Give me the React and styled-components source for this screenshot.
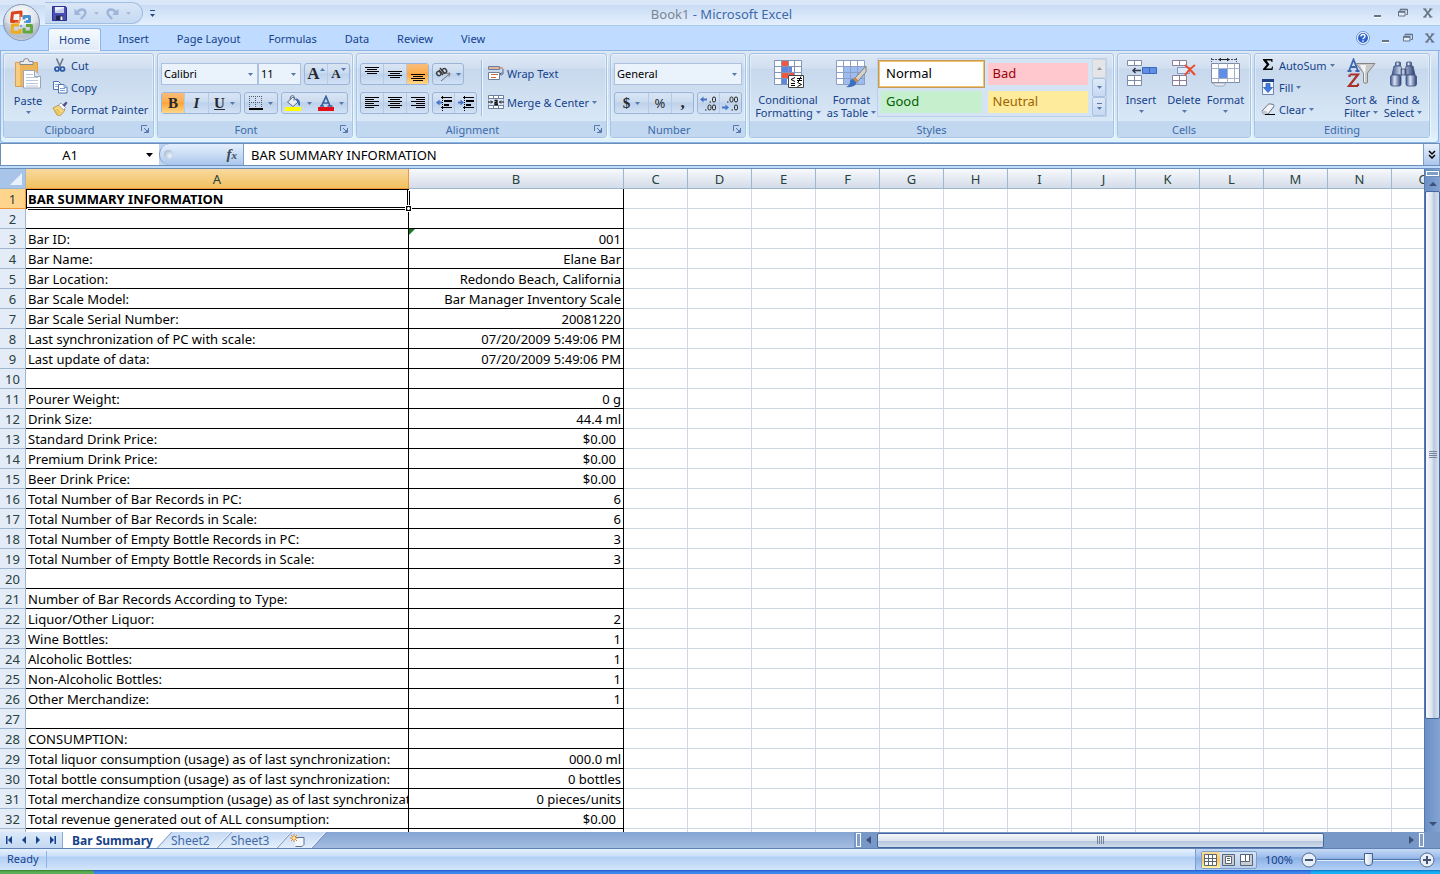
import React from "react";
import styled, { createGlobalStyle } from "styled-components";

const UI = '"Noto Sans", "Open Sans", sans-serif';
const SERIF = '"Liberation Serif", serif';

const GlobalStyle = createGlobalStyle`
  *, *::before, *::after { box-sizing: border-box; }
  body { margin: 0; overflow: hidden; }
  button, input, select { font: inherit; color: inherit; margin: 0; padding: 0; border: 0; background: none; outline: 0; }
  svg { display: block; flex: none; }
`;

const Window = styled.div`
  display: flex;
  flex-direction: column;
  height: 100vh;
  font: 11px/13px ${UI};
  color: #15428b;
  background: #bfdbff;
`;

/* title bar */

const TitleBar = styled.header`
  position: relative;
  display: flex;
  align-items: center;
  height: 26px;
  padding: 0 6px 0 45px;
  background: linear-gradient(#d9e7f9 0 5px, #c9dcf4 5px, #e4effd 25px, #a9cbec 25px);
`;

const OfficeButton = styled.button`
  position: absolute;
  left: 2px;
  top: 3px;
  z-index: 2;
`;

const QuickAccess = styled.div`
  display: flex;
  align-items: center;
  gap: 7px;
  width: 98px;
  height: 22px;
  padding-left: 7px;
  border: 1px solid #a3bfe3;
  border-left: 0;
  border-radius: 0 11px 11px 0;
  background: linear-gradient(#d9e6f7, #c5d9f1);
`;

const PlainButton = styled.button`
  display: flex;
  align-items: center;
  justify-content: center;
`;

const Customize = styled(PlainButton)`
  margin-left: 7px;
`;

const Title = styled.h1`
  flex: 1;
  margin: 0;
  padding: 1px 84px 0 0;
  text-align: center;
  font: 13px/18px ${UI};
  color: #3e6aaa;

  span { color: #7b8591; }
`;

const WindowButtons = styled.div`
  display: flex;
  align-items: center;
  gap: ${(p) => p.$gap}px;
`;

/* ribbon tabs */

const TabRow = styled.nav`
  display: flex;
  align-items: flex-end;
  gap: 6px;
  height: 25px;
  padding: 0 4px 0 48px;
  border-bottom: 1px solid #8db2e3;
`;

const Tab = styled.button`
  height: ${(p) => (p.$active ? 23 : 22)}px;
  padding: 0 11px;
  line-height: 22px;
  color: #15428b;
  ${(p) =>
    p.$active &&
    `
    margin-bottom: -1px;
    border: 1px solid #8db2e3;
    border-bottom: 0;
    border-radius: 3px 3px 0 0;
    padding: 0 10px 1px;
    line-height: 20px;
    background: linear-gradient(#f7fbff, #dfeaf8);
    box-shadow: inset 0 0 0 1px #f4f9ff;
  `}
`;

const TabTools = styled(WindowButtons)`
  margin-left: auto;
  height: 24px;
`;

/* ribbon */

const Ribbon = styled.section`
  display: flex;
  gap: 3px;
  height: 92px;
  margin: 0 1px 0 0;
  padding: 2px 8px 4px 2px;
  border: solid #8db2e3;
  border-width: 0 1px 1px;
  border-radius: 0 0 4px 4px;
  background: linear-gradient(#dde8f5, #cddff2 16px, #c9dcf0 18px, #d8ebf9 80px, #e3f5fd);
`;

const GroupBox = styled.div`
  display: flex;
  flex-direction: column;
  flex: ${(p) => (p.$grow ? "1 1" : "0 0")} ${(p) => p.$w}px;
  height: 85px;
  border: 1px solid #a8c4e4;
  border-radius: 3px;
  background: linear-gradient(#dee8f5, #d1dff0 14px, #c7d8ed 15px, #d9e8f6 68px);
  box-shadow: inset 0 0 0 1px rgba(255, 255, 255, 0.35), 1px 1px 0 #eef6fd;
  overflow: hidden;
`;

const GroupBody = styled.div`
  display: flex;
  flex: 1;
  min-height: 0;
`;

const GroupLabel = styled.div`
  display: flex;
  align-items: center;
  gap: 6px;
  height: 16px;
  padding-right: ${(p) => (p.$launcher ? 4 : 0)}px;
  background: #c1d8f0;
  color: #3e6aaa;

  span { flex: 1; text-align: center; }
`;

const BigButton = styled.button`
  display: flex;
  flex-direction: column;
  align-items: center;
  width: ${(p) => p.$w}px;
  padding-top: ${(p) => p.$top || 4}px;
  white-space: nowrap;

  > svg:first-child { margin-bottom: 5px; }
  > svg:last-child { margin-top: 4px; }
`;

const Line = styled.span`
  display: flex;
  align-items: center;
  gap: 3px;
`;

const Stack = styled.div`
  display: flex;
  flex-direction: column;
`;

const TextButton = styled.button`
  display: flex;
  align-items: center;
  gap: ${(p) => p.$gap || 4}px;
  height: 22px;
  white-space: nowrap;
`;

const Rows = styled.div`
  display: flex;
  flex-direction: column;
  gap: 7px;
  padding: ${(p) => p.$top || 9}px 3px 0;
`;

const Row = styled.div`
  display: flex;
  gap: 3px;
  height: 22px;
`;

const Strip = styled.div`
  display: flex;
  border: 1px solid #9ab5d9;
  border-radius: 3px;
  background: linear-gradient(#d9e5f4, #cbdbef 9px, #bdd1ea 10px, #d2e2f5);
`;

const StripButton = styled.button`
  display: flex;
  align-items: center;
  justify-content: center;
  gap: ${(p) => (p.$tight ? 0 : 5)}px;
  width: ${(p) => p.$w || 22}px;
  color: #26292e;
  ${(p) => p.$divide && "border-left: 1px solid #b4cae6;"}
  ${(p) => p.$on && "background: linear-gradient(#f8bd7a, #fcae4c 9px, #fda43a 10px, #fdd888);"}
  ${(p) => p.$tight && "svg { align-self: flex-start; margin-top: 4px; }"}
`;

const Glyph = styled.span`
  font: ${(p) => (p.$italic ? "italic " : "")}bold ${(p) => p.$size || 15}px/18px ${SERIF};
  ${(p) => p.$under && "text-decoration: underline;"}
`;

const Percent = styled.span`
  font-size: 13px;
`;

const ComboBox = styled.label`
  display: flex;
  align-items: center;
  width: ${(p) => p.$w}px;
  height: 22px;
  margin-right: ${(p) => (p.$join ? -3 : 0)}px;
  padding-right: 4px;
  border: 1px solid #abc1de;
  background: #eaf2fb;

  select {
    appearance: none;
    flex: 1;
    min-width: 0;
    padding: 0 0 2px 2px;
    color: #000;
  }
`;

const Separator = styled.div`
  width: 2px;
  height: 56px;
  margin: 6px 2px 0 1px;
  background: linear-gradient(90deg, #9dbbdf 1px, #eef5fc 1px);
`;

const Gallery = styled.div`
  display: flex;
  flex: 1;
  margin: 4px 6px 4px 0;
  border: 1px solid #b9cfea;
  background: #d5e4f5;
`;

const Swatches = styled.div`
  flex: 1;
  display: grid;
  grid-template-columns: 1fr 1fr;
  grid-template-rows: 22px 22px;
  gap: 6px;
  padding: 4px 4px 3px 3px;
`;

const Swatch = styled.button`
  padding: 0 0 2px 5px;
  text-align: left;
  font: 13px/20px ${UI};
  color: ${(p) => p.$color};
  background: ${(p) => p.$bg};
  ${(p) => p.$on && "box-shadow: 0 0 0 1px #fff, 0 0 0 2px #f2c668, 0 0 0 3px #c09a60;"}
`;

const GalleryScroll = styled.div`
  display: flex;
  flex-direction: column;
  width: 14px;

  button {
    flex: 1;
    border: 1px solid #a9c2e2;
    border-radius: 2px;
    background: linear-gradient(#dfeaf8, #c6d9f1);
  }
  button:first-child { background: #e3e5e9; border-color: #d0d5dd; }
`;

/* formula bar */

const FormulaBar = styled.div`
  display: flex;
  height: 23px;
  border: 1px solid #6b8fb8;
  border-width: 1px 0;
  background: #bfd5f0;
  font: 13px/20px ${UI};
  color: #000;
`;

const NameBox = styled.label`
  display: flex;
  align-items: center;
  width: 159px;
  padding-right: 6px;
  background: #fff;
  border-left: 1px solid #6b8fb8;

  input { flex: 1; min-width: 0; text-align: center; padding-right: 7px; }
`;

const FxArea = styled.div`
  display: flex;
  align-items: center;
  justify-content: space-between;
  width: 85px;
  padding: 0 6px 0 4px;
  border: 1px solid #7f9fc8;
  border-width: 0 1px 0 1px;
  border-radius: 10px 0 0 10px;
  background: linear-gradient(#e4effc, #c9dcf4 50%, #a9c6ec);
`;

const Knob = styled.span`
  width: 9px;
  height: 9px;
  border-radius: 50%;
  background: radial-gradient(circle at 65% 65%, #eef4fb, #93aacb);
`;

const Fx = styled.button`
  font: italic bold 15px/18px ${SERIF};
  color: #3d4a5c;

  small { font-size: 11px; }
`;

const FormulaInput = styled.input`
  flex: 1;
  min-width: 0;
  padding-left: 7px;
  background: #fff;
`;

const ExpandButton = styled(PlainButton)`
  width: 17px;
  border: 1px solid #7f9fc8;
  border-width: 0 1px;
  background: linear-gradient(#e8f1fc, #a9c6ec);
`;

/* worksheet */

const Workspace = styled.main`
  display: flex;
  flex: 1;
  min-height: 0;
  margin-top: 2px;
  border-top: 1px solid #6b8fb8;
`;

const SheetArea = styled.div`
  flex: 1;
  min-width: 0;
  overflow: hidden;
  background: #fff;
`;

const Table = styled.table`
  width: 1456px;
  table-layout: fixed;
  border-collapse: separate;
  border-spacing: 0;
  font: 13px/18px ${UI};
  color: #000;
`;

const Corner = styled.td`
  padding: 3px;
  border: solid #9eb6ce;
  border-width: 0 1px 1px 0;
  background: #a9c4e9;

  svg { margin: 0 0 0 auto; }
`;

const ColHead = styled.th`
  height: 20px;
  padding: 1px 0 0;
  font-weight: 400;
  color: #27413e;
  border: solid ${(p) => (p.$on ? "#f29536" : "#9eb6ce")};
  border-width: 0 1px 1px 0;
  background: ${(p) => (p.$on ? "linear-gradient(#f9d99f, #f1c15f)" : "linear-gradient(#f7f9fc, #d4dce9)")};
`;

const RowHead = styled.th`
  height: 20px;
  padding: 1px 0 0;
  font-weight: 400;
  color: #27413e;
  border: solid ${(p) => (p.$on ? "#f29536" : "#9eb6ce")};
  border-width: 0 1px 1px 0;
  background: ${(p) => (p.$on ? "#ffd58d" : "#e4ecf7")};
`;

const Cell = styled.td`
  position: relative;
  height: 20px;
  padding: 1px ${(p) => (p.$inset ? 7 : 2)}px 0 2px;
  text-align: ${(p) => (p.$right ? "right" : "left")};
  font-weight: ${(p) => (p.$bold ? 700 : 400)};
  white-space: nowrap;
  border: solid ${(p) => (p.$data ? "#000" : "#d0d7e5")};
  border-width: 0 1px 1px 0;

  div { height: 18px; overflow: hidden; margin-right: ${(p) => (p.$right ? 0 : -2)}px; }
`;

const Selection = styled.i`
  position: absolute;
  inset: 0;
  border: 1px solid #000;
  box-shadow: 1px 1px 0 #fff, 2px 2px 0 #000;
  z-index: 1;

  &::after {
    content: "";
    position: absolute;
    right: -5px;
    bottom: -5px;
    width: 7px;
    height: 7px;
    border: 1px solid #fff;
    background: radial-gradient(#fff 1px, #000 2px);
  }
`;

const ErrorMark = styled.i`
  position: absolute;
  left: 0;
  top: 0;
  border: 3px solid;
  border-color: #1a7a22 transparent transparent #1a7a22;
`;

/* scroll bars */

const VScroll = styled.div`
  display: flex;
  flex-direction: column;
  align-items: center;
  width: 16px;
  padding: 2px 0 4px;
  border-left: 1px solid #5578ae;
  background: linear-gradient(90deg, #6c90c4, #82a3d4);
`;

const Splitter = styled.i`
  width: 13px;
  height: 5px;
  border: 1px solid #fff;
  background: #7f9fc8;
  outline: 1px solid #6b8fb8;
`;

const VTrack = styled.div`
  flex: 1;
  align-self: stretch;
  display: flex;
  flex-direction: column;
  align-items: center;
  gap: 3px;
  margin: 4px 0;
`;

const VThumb = styled.div`
  flex: 0 0 83%;
  display: flex;
  align-items: center;
  justify-content: center;
  width: 15px;
  border: 1px solid #45659c;
  border-radius: 2px;
  background: linear-gradient(90deg, #f6f9fd, #dfe5ee 45%, #b9c9df 60%, #d5e3f4);
`;

const SheetBar = styled.div`
  display: flex;
  height: 17px;
  border-bottom: 1px solid #5f81b5;
  background: linear-gradient(#86a5d3, #a3bce0);
`;

const SheetNav = styled.div`
  display: flex;
  align-items: center;
  justify-content: space-around;
  width: 63px;
  padding: 0 2px;
  border-right: 1px solid #8ba8d0;
  background: linear-gradient(#dbe8f9, #c4d8f2);
`;

const SheetTab = styled.button`
  position: relative;
  z-index: ${(p) => p.$z};
  display: flex;
  align-items: center;
  padding: 1px ${(p) => (p.$on ? 11 : 14)}px 0 ${(p) => (p.$on ? 9 : 7)}px;
  font: ${(p) => (p.$on ? 700 : 400)} 12px/16px ${UI};
  color: ${(p) => (p.$on ? "#15428b" : "#3e6aaa")};
  white-space: nowrap;

  &::before {
    content: "";
    position: absolute;
    z-index: -1;
    inset: 0 -1px 0 -14px;
    transform: skewX(-42deg);
    border-right: 1px solid #6f8fc0;
    box-shadow: inset -1px 0 0 #fff;
    background: ${(p) => (p.$on ? "#fff" : "linear-gradient(#c5d9f3, #e3eefb)")};
  }
`;

const SheetTabs = styled.div`
  display: flex;
  flex: 1;
  overflow: hidden;
`;

const HScroll = styled.div`
  display: flex;
  align-items: center;
  flex: 0 0 586px;
  gap: 4px;
  padding: 0 16px 0 2px;
  background: #7898c8;
`;

const Handle = styled.i`
  width: 5px;
  height: 14px;
  border: 1px solid #fff;
  background: #7f9fc8;
`;

const HTrack = styled.div`
  flex: 1;
  height: 15px;
`;

const HThumb = styled.div`
  display: flex;
  align-items: center;
  justify-content: center;
  width: 85%;
  height: 15px;
  border: 1px solid #45659c;
  border-radius: 2px;
  background: linear-gradient(#f3f6fa, #dde4ee 50%, #b7c6db 55%, #cfdcec);
`;

/* status bar */

const StatusBar = styled.footer`
  display: flex;
  align-items: center;
  height: 21px;
  padding-left: 7px;
  background: linear-gradient(#e6f1fe, #cbe0fb 7px, #b1cff5 8px, #d3e5fb);
`;

const Ready = styled.span`
  width: 40px;
  height: 17px;
  line-height: 16px;
  border-right: 1px solid #8db2e3;
`;

const ViewTools = styled.div`
  display: flex;
  align-items: center;
  gap: 8px;
  height: 21px;
  margin-left: auto;
  padding: 0 5px;
  border-left: 1px solid #7f9fc8;
  background: linear-gradient(#c5daf6, #9dbdeb 8px, #8cb1e6 9px, #b3d0f5);
`;

const ViewSwitch = styled.div`
  display: flex;
  height: 18px;
  border: 1px solid #7f9fc8;
  border-radius: 2px;
  background: linear-gradient(#d5e4f8, #b8d0f1);
`;

const ViewButton = styled.button`
  display: flex;
  align-items: center;
  justify-content: center;
  width: 18px;
  ${(p) => p.$on && "background: linear-gradient(#fbd9a0, #fbc762 8px, #fff3a6);"}
`;

const ZoomBox = styled.div`
  display: flex;
  align-items: center;
  width: 134px;
`;

const ZoomRange = styled.input`
  appearance: none;
  flex: 1;
  min-width: 0;
  height: 16px;
  background: linear-gradient(transparent 7px, #4e73a8 7px 8px, #e8f1fc 8px 9px, transparent 9px);

  &::-webkit-slider-thumb {
    appearance: none;
    width: 9px;
    height: 13px;
    border: 1px solid #44608c;
    border-radius: 1px 1px 5px 5px;
    background: linear-gradient(90deg, #fff, #c7d6ea);
  }
`;

const TaskBar = styled.div`
  display: flex;
  height: 4px;
  background: linear-gradient(#2457c5, #3a86ec 2px);

  &::before {
    content: "";
    width: 94px;
    border-radius: 0 3px 0 0;
    background: linear-gradient(#2f7d2f, #5dac57 2px);
  }
  &::after {
    content: "";
    width: 129px;
    margin-left: auto;
    background: linear-gradient(#0c6fc0, #18b0f2 2px);
  }
`;

/* icons */

const Caret = ({ color = "#5678ac", up, bar }) => (
  <svg width="5" height={bar ? 7 : 3} viewBox={bar ? "0 -4 5 7" : "0 0 5 3"}>
    {bar && <path d="M0-4h5v1H0z" fill={color} />}
    <path d={up ? "M0 3h5L2.500 0z" : "M0 0h5L2.500 3z"} fill={color} />
  </svg>
);

const Launcher = () => (
  <svg width="8" height="8" viewBox="0 0 8 8" fill="none" stroke="#5678ac">
    <path d="M.5 6V.5H6" />
    <path d="M3 3l3 3M7.500 3v4.500H3" />
    <path d="M7 4.500V7H4.500z" fill="#5678ac" stroke="none" />
  </svg>
);

const OfficeLogo = () => (
  <svg width="40" height="40" viewBox="0 0 40 40">
    <defs>
      <radialGradient id="orb" cx=".5" cy=".3" r=".75">
        <stop offset="0" stopColor="#fff" />
        <stop offset=".55" stopColor="#dfe4ea" />
        <stop offset=".8" stopColor="#aeb9c8" />
        <stop offset="1" stopColor="#e9eef5" />
      </radialGradient>
    </defs>
    <circle cx="19.500" cy="19.500" r="18" fill="url(#orb)" stroke="#8195b4" />
    <path d="M2.500 19.500a17 17 0 0034 0q-17 5-34 0z" fill="#b6c1d0" opacity=".5" />
    <g fill="none" strokeWidth="3" strokeLinejoin="round">
      <path d="M16.500 18.500H9.500l1-8.500 8.500-1v5" stroke="#d8451a" />
      <path d="M22 16.500v-3h5.500V18.500H24" stroke="#4a8fd0" />
      <path d="M17 22H10.500l-.5 7 8 .5V26" stroke="#efac1f" />
      <path d="M24 22.500h5.500V29H22v-4" stroke="#62a83c" />
    </g>
    <path d="M18 12.500v7h-5" fill="none" stroke="#f08b45" strokeWidth="1.500" />
    <path d="M18 18h3v3h-3z" fill="#fff" />
    <path d="M18 22h2v2h-2zM22 18h2v2h-2z" fill="#7ba6cf" />
  </svg>
);

const SaveIcon = () => (
  <svg width="15" height="15" viewBox="0 0 15 15">
    <path d="M.5.500h13l1 1v13H.5z" fill="#4a4fb4" stroke="#2d3190" />
    <path d="M3 1h9v6H3z" fill="#eef1fa" />
    <path d="M3 5l9-3v5H3z" fill="#c4cdec" />
    <path d="M4 9.500h7V14H4z" fill="#23264f" />
    <path d="M8.500 10.500h2V14h-2z" fill="#fff" />
  </svg>
);

const UndoIcon = ({ flip }) => (
  <svg width="13" height="13" viewBox="0 0 13 13" fill="none" stroke="#9fb4d8">
    <g transform={flip ? "matrix(-1 0 0 1 13 0)" : undefined}>
      <path d="M3 6C5.500 1.500 11 1.500 11.500 5.500c0 3-2.500 4-4.500 6.500" strokeWidth="2.400" />
      <path d="M.5 1.500V8H7z" fill="#9fb4d8" stroke="none" />
    </g>
  </svg>
);

const MinIcon = () => (
  <svg width="12" height="12" viewBox="0 0 12 12">
    <path d="M2 8h7v2H2z" fill="#667384" />
    <path d="M2 10h7v1H2z" fill="#fff" />
  </svg>
);
const RestoreIcon = () => (
  <svg width="12" height="12" viewBox="0 0 12 12" fill="none" stroke="#667384">
    <path d="M3 4V2.500h7.500v5H9" />
    <path d="M3 2.500h7.500" strokeWidth="1.600" />
    <path d="M1.500 4.500H8v4.500H1.500z" fill="#e4effc" />
    <path d="M1.500 5H8" strokeWidth="1.600" />
  </svg>
);
const CloseIcon = () => (
  <svg width="12" height="12" viewBox="0 0 12 12" fill="none" stroke="#667384">
    <path d="M2.500 2l6.500 8M9 2l-6.500 8" strokeWidth="1.800" />
    <path d="M1 2h3.500M7 2h3.500M1 10h3.500M7 10h3.500" />
  </svg>
);
const HelpIcon = () => (
  <svg width="14" height="14" viewBox="0 0 14 14">
    <circle cx="7" cy="7" r="6.500" fill="#f4f9ff" stroke="#6f94cf" />
    <circle cx="7" cy="7" r="5" fill="#2b62cc" />
    <path d="M5 5.500q0-2 2-2t2 1.800q0 1-1 1.500T7 8.300" fill="none" stroke="#fff" strokeWidth="1.400" />
    <path d="M6.300 9.300h1.400v1.400H6.300z" fill="#fff" />
  </svg>
);

const PasteIcon = () => (
  <svg width="28" height="31" viewBox="0 0 28 31">
    <path d="M1.500 4.500h22v24h-22z" fill="#eeb458" stroke="#dda04a" />
    <path d="M2 5h4v23H2z" fill="#f6cd82" />
    <path d="M6 3.500h3.500q0-3 2.800-3t2.800 3H19v3H6z" fill="#e9eaec" stroke="#84888f" />
    <path d="M9.500 12.500h11l6 6v11.500h-17z" fill="#fff" stroke="#97a5bd" />
    <path d="M20.500 12.500v6h6" fill="#dde6f3" stroke="#97a5bd" />
    <path d="M12 16.500h7M12 19.500h12M12 22.500h12M12 25.500h12M12 28h12" stroke="#b9c6dc" />
  </svg>
);
const CutIcon = () => (
  <svg width="16" height="16" viewBox="0 0 16 16" fill="none">
    <path d="M4.500 1.500l4 9M11 1.500l-4 9" stroke="#6c7787" strokeWidth="1.600" />
    <circle cx="5" cy="12" r="2" stroke="#2c57a8" strokeWidth="1.700" />
    <circle cx="10.500" cy="12" r="2" stroke="#2c57a8" strokeWidth="1.700" />
  </svg>
);
const CopyIcon = () => (
  <svg width="16" height="16" viewBox="0 0 16 16" stroke="#4a72b0" fill="#fff">
    <path d="M1.500 2.500h5l2 2v6h-7z" />
    <path d="M3 5.500h4M3 7.500h4" stroke="#89a9d8" />
    <path d="M6.500 5.500h5.500l3 3v5.500H6.500z" />
    <path d="M12 5.500v3h3M8 9.500h5M8 11.500h5" stroke="#7a9cd0" fill="none" />
  </svg>
);
const PainterIcon = () => (
  <svg width="16" height="16" viewBox="0 0 16 16">
    <path d="M1 7l6-3 6 5-4 5q-2 1-4 0z" fill="#f5d77c" stroke="#b48a35" strokeWidth=".8" />
    <path d="M6.500 4l2.500-2 4.500 4.500-2 2.500z" fill="#fff" stroke="#8c8c9b" strokeWidth=".8" />
    <path d="M10.500 4L14 .5 15.500 2 12.500 6z" fill="#574f86" />
    <path d="M2.500 9l4 4M4.500 8l4 4" stroke="#d5a846" />
  </svg>
);

const BorderIcon = () => (
  <svg width="14" height="14" viewBox="0 0 14 14" fill="none">
    <path
      d="M0 .5h14M0 6.500h14M.5 0v12M6.500 0v12M12.500 0v12"
      stroke="#4a5a76"
      strokeDasharray="1 1"
      shapeRendering="crispEdges"
    />
    <path d="M0 13h14" stroke="#000" strokeWidth="2" />
  </svg>
);
const FillColorIcon = () => (
  <svg width="17" height="17" viewBox="0 0 17 17">
    <path d="M2.500 7l5.500-5 5 5-5 4.500z" fill="#e8eef6" stroke="#5b6a82" />
    <path d="M5 4.500q0-4 2.500-4T9 5.500" fill="none" stroke="#5b6a82" />
    <path d="M10.500 3q5.500 1 4.500 8-2.500-1-2.500-4z" fill="#3b6ab8" />
    <path d="M0 12h16v4H0z" fill="#ff0" />
  </svg>
);
const FontColorIcon = () => (
  <svg width="16" height="17" viewBox="0 0 16 17">
    <path d="M3.500 11L8 1.500l4 9.500M5 8h6M2 11h4M9.500 11h5" fill="none" stroke="#3a5f9e" strokeWidth="1.700" />
    <path d="M0 12h16v4H0z" fill="#e3101c" />
  </svg>
);

const AlignIcon = ({ kind }) => {
  const rows = {
    top: [[0, 14], [2, 10], [0, 14], [2, 10]],
    left: [[0, 14], [0, 9], [0, 14], [0, 9], [0, 14], [0, 9]],
    center: [[0, 14], [2, 10], [0, 14], [2, 10], [0, 14], [2, 10]],
    right: [[0, 14], [5, 9], [0, 14], [5, 9], [0, 14], [5, 9]],
  };
  const vertical = { top: 0, middle: 4, bottom: 7 };
  const start = kind in vertical ? vertical[kind] : 1;
  const lines = rows[kind in vertical ? "top" : kind];
  return (
    <svg width="14" height="14" viewBox="0 0 14 14" shapeRendering="crispEdges">
      {lines.map(([x, w], i) => (
        <rect key={i} x={x} y={start + i * 2} width={w} height="1" fill="#000" />
      ))}
    </svg>
  );
};

const IndentIcon = ({ out }) => (
  <svg width="16" height="15" viewBox="0 0 16 15">
    <path d="M5 1.500h11M5 11.500h11" stroke="#000" />
    <path d="M8 4h8v2H8zM8 8h5v2H8z" fill="#000" />
    <path d="M6.500 0v15" stroke="#000" strokeDasharray="1 1" />
    <path d={out ? "M0 6.500l3.500-3v2H6v2H3.500v2z" : "M6 6.500l-3.500-3v2H0v2h2.500v2z"} fill="#4674c9" />
  </svg>
);

const OrientIcon = () => (
  <svg width="16" height="16" viewBox="0 0 16 16" fill="none" stroke="#3f3f3f">
    <path d="M6 15l8.500-7M11.500 7.500l3.500-.5-1 3.500" stroke="#6f6f6f" />
    <ellipse cx="3.800" cy="7.500" rx="2" ry="2.300" strokeWidth="1.500" transform="rotate(-40 3.800 7.500)" />
    <path d="M4 4l4 5M5 2l4.500 5.500" strokeWidth="1.500" />
    <ellipse cx="9.500" cy="4.800" rx="2" ry="2.300" strokeWidth="1.500" transform="rotate(-40 9.500 4.800)" />
  </svg>
);
const WrapIcon = () => (
  <svg width="16" height="16" viewBox="0 0 16 16">
    <path d="M.5 1.500h11v3H.5zM.5 7.500h11v7H.5z" fill="#fff" stroke="#6b7f9f" />
    <path d="M1 3h14M3 9.500h7M3 12.500h5" stroke="#c66a3c" />
    <path d="M15 4v5h-3M13.500 7.500L12 9l1.500 1.500" fill="none" stroke="#55657f" />
  </svg>
);
const MergeIcon = () => (
  <svg width="16" height="16" viewBox="0 0 16 16">
    <path d="M.5 1.500h15v13H.5zM5.500 1.500v3M10.500 1.500v3M5.500 11.500v3M10.500 11.500v3" fill="#fff" stroke="#6b7f9f" />
    <path d="M0 4.500h16v7H0z" fill="#dce8f7" stroke="#6b7f9f" />
    <path d="M0 8h4.500M11.500 8H16M3 6.500L4.500 8 3 9.500M13 6.500L11.500 8 13 9.500" fill="none" stroke="#111" />
    <path d="M6.500 6.500H9v4M9 8.500H7v2h3" fill="none" stroke="#111" strokeWidth="1.300" />
  </svg>
);
const DecimalIcon = ({ more }) => (
  <svg width="17" height="15" viewBox="0 0 17 15" fill="none" stroke="#222">
    <rect x="12.500" y="1" width="3" height="5" rx="1.500" />
    <rect x="12.500" y="9" width="3" height="5" rx="1.500" />
    {more ? (
      <>
        <path d="M9.500 6H11M5 14h1.500" />
        <rect x="8" y="9" width="3" height="5" rx="1.500" />
      </>
    ) : (
      <>
        <path d="M5 6h1.500M9.500 14H11" />
        <rect x="8" y="1" width="3" height="5" rx="1.500" />
      </>
    )}
    <path d={more ? "M0 3.500L3.500.5v2H7v2H3.500v2z" : "M7 11.500l-3.500-3v2H0v2h3.500v2z"} fill="#4674c9" stroke="none" />
  </svg>
);

const CondIcon = () => (
  <svg width="31" height="29" viewBox="0 0 31 29">
    <path d="M1.500 1.500h27v24h-27z" fill="#fff" />
    <path d="M8 1h7v6H8zM8 14h14v5H8z" fill="#ee5843" />
    <path d="M8 7h11v7H8zM8 19h6v7H8z" fill="#5d87df" />
    <path d="M1.500 1.500h27v24h-27zM8.500 1.500v24M15.500 1.500v24M21.500 1.500v24M1.500 7.500h27M1.500 13.500h27M1.500 19.500h27" fill="none" stroke="#8496b5" />
    <path d="M15.500 16.500h15v12h-15z" fill="#fff" stroke="#444" />
    <path d="M22 18.500l-4 2 4 2M18 24.500h4M18 26.500h4M24 19.500h5M24 21.500h5M28 17.500l-3 6M24.500 23.500l4 2-4 2" fill="none" stroke="#000" />
  </svg>
);
const TableIcon = () => (
  <svg width="31" height="29" viewBox="0 0 31 29">
    <path d="M.5 1.500h28v24H.5z" fill="#fff" />
    <path d="M7 7h22v19H7z" fill="#9dbdf2" />
    <path d="M.5 1.500h28v24H.5zM7.500 1.500v24M14.500 1.500v24M21.500 1.500v24M.5 7.500h28M.5 13.500h28M.5 19.500h28" fill="none" stroke="#8ba0c4" />
    <path d="M30 7v6l-8 9-3-3z" fill="#d7d3cc" stroke="#6f6a64" strokeWidth=".8" />
    <path d="M19 18l3.500 3.500-2 2-3.500-3.500z" fill="#c58a4a" />
    <path d="M17 20l3.500 3.500Q19 29 10 28q4-2 4-5t3-3z" fill="#3f6fbc" />
  </svg>
);
const InsertCellsIcon = () => (
  <svg width="31" height="29" viewBox="0 0 31 29">
    <path d="M1.500 1.500h14v5h-14zM8.500 1.500v5M1.500 16.500h14v10h-14zM8.500 16.500v10M1.500 21.500h14" fill="#fff" stroke="#7f8ca5" />
    <path d="M16.500 8.500h14v6h-14z" fill="#5f8ee6" stroke="#3d67b8" />
    <path d="M23.500 8.500v6" stroke="#3d67b8" />
    <path d="M7 11.500h8M9.500 9L7 11.500 9.500 14" fill="none" stroke="#333c4c" strokeWidth="1.500" />
  </svg>
);
const DeleteCellsIcon = () => (
  <svg width="26" height="29" viewBox="0 0 26 29">
    <path d="M1.500 1.500h14v5h-14zM8.500 1.500v5M1.500 16.500h14v10h-14zM8.500 16.500v10M1.500 21.500h14" fill="#fff" stroke="#8a7f95" />
    <path d="M6.500 8.500h12v6h-12z" fill="#dfeafa" stroke="#3d4f88" strokeDasharray="1 1" />
    <path d="M14 6q5 4 10 10M24 6q-6 4-10 10" fill="none" stroke="#ee4a2c" strokeWidth="2" />
  </svg>
);
const FormatCellsIcon = () => (
  <svg width="31" height="30" viewBox="0 0 31 30">
    <path d="M1.500 0v4M26.500 0v4M2 1.500h8M18 1.500h8" stroke="#44506a" strokeDasharray="2 1" />
    <path d="M9 1.500h10M11 0L9 1.500 11 3M17 0l2 1.500L17 3" fill="none" stroke="#222" />
    <path d="M1.500 5.500h28v19h-28z" fill="#fff" stroke="#7f8ca5" />
    <path d="M8.500 5.500v19M17.500 5.500v19M24.500 5.500v19M1.500 10.500h28M1.500 20.500h28" stroke="#a6b2c8" />
    <path d="M9 11h8v9H9z" fill="#5f8ee6" />
    <path d="M2 25h14l-2 3H6z" fill="#e9edf3" stroke="#8b94a6" strokeWidth=".7" />
  </svg>
);
const SigmaIcon = () => (
  <svg width="14" height="12" viewBox="0 0 14 12">
    <path d="M2 0h9.500v3h-1L10 1.500H5.500L8.500 5.500 5 9.500h5.500l.5-2h1L11.500 11H2v-1l3.700-4.500L2 1z" fill="#000" />
  </svg>
);
const FillIcon = () => (
  <svg width="14" height="16" viewBox="0 0 14 16">
    <path d="M1.500.5h11v15h-11z" fill="#f2f7fe" stroke="#6b86b0" />
    <path d="M1 0h12v3H1z" fill="#1f3f86" />
    <path d="M5 4.500h4v4h2.500L7 13.500 2.500 8.500H5z" fill="#3f7be0" stroke="#2654a8" strokeWidth=".7" />
  </svg>
);
const EraserIcon = () => (
  <svg width="14" height="14" viewBox="0 0 14 14">
    <path d="M1 9l6-6.500q1-1 2.500-.5l3 .5q1 1 0 2.500L7 12H2.500z" fill="#f2f4f7" stroke="#6b727e" />
    <path d="M1 9q2-1 4 0l2 3H2.500z" fill="#c3cad4" />
    <path d="M4 12.500h10" stroke="#000" />
  </svg>
);
const SortIcon = () => (
  <svg width="31" height="30" viewBox="0 0 31 30" fill="none">
    <path d="M3 13L7.500 1.500 12 13M5 9h5.500M1.500 13h4M9.500 13h4" stroke="#3a67b0" strokeWidth="1.800" />
    <path d="M4 16.500h8L3 28h9M3.500 19v-2.500M12 25.500V28" stroke="#a8322a" strokeWidth="2.200" />
    <path d="M10 5.500h19L21.500 15v9.500q-2 2-4 0V15z" fill="#c9c9c9" stroke="#858585" />
    <path d="M14 7h6l-1 8v9h-1v-9z" fill="#f3f3f3" />
  </svg>
);
const FindIcon = () => (
  <svg width="29" height="27" viewBox="0 0 29 27">
    <defs>
      <linearGradient id="lens">
        <stop offset="0" stopColor="#3b568c" />
        <stop offset=".4" stopColor="#dbe4f4" />
        <stop offset="1" stopColor="#273c70" />
      </linearGradient>
    </defs>
    <g fill="url(#lens)" stroke="#3a4f7e" strokeWidth=".8">
      <rect x="6.500" y="1" width="5" height="4" rx="1" />
      <rect x="17.500" y="1" width="5" height="4" rx="1" />
      <path d="M5 5h7l1 9H3zM17 5h7l2 9H16z" />
      <path d="M12 8h5v6h-5z" />
      <rect x="1.500" y="14" width="10.500" height="11" rx="2" />
      <rect x="17" y="14" width="10.500" height="11" rx="2" />
    </g>
  </svg>
);

const NavIcon = ({ left, bar }) => (
  <svg width="7" height="8" viewBox="0 0 7 8" fill="#15428b">
    <g transform={left ? "matrix(-1 0 0 1 7 0)" : undefined}>
      <path d="M1 0v8l4-4z" />
      {bar && <path d="M5.500 0H7v8H5.500z" />}
    </g>
  </svg>
);
const NewSheetIcon = () => (
  <svg width="15" height="13" viewBox="0 0 15 13">
    <path d="M4.500 3.500h9.500v7l-2 2h-6.500" fill="#f4f8fd" stroke="#5a6f94" />
    <path d="M4 0v8M0 4h8M1 1l6 6M7 1L1 7" stroke="#e0862a" />
    <circle cx="4" cy="4" r="1.500" fill="#ffe58a" />
  </svg>
);
const Grip = ({ vertical }) => (
  <svg width="8" height="8" viewBox="0 0 8 8" shapeRendering="crispEdges">
    <path d={vertical ? "M0 0h8v1H0zM0 2h8v1H0zM0 4h8v1H0zM0 6h8v1H0z" : "M0 0v8h1V0zM2 0v8h1V0zM4 0v8h1V0zM6 0v8h1V0z"} fill="#75839c" />
  </svg>
);
const ViewIcon = ({ kind }) => (
  <svg width="13" height="12" viewBox="0 0 13 12" fill="#fff" stroke="#5b6472">
    <path d="M.5.5h12v11H.5z" fill={kind === "grid" ? "#fff" : "#c9ced6"} />
    {kind === "grid" && <path d="M4.500.5v11M8.500.5v11M.5 4.500h12M.5 7.500h12" />}
    {kind === "page" && <path d="M3.500 2.500h6v7h-6zM5 4.500h3M5 6.500h3" />}
    {kind === "break" && <path d="M.5.5h5v7h-5zM5.500.5h4v7h-4z" />}
  </svg>
);
const ZoomIcon = ({ plus }) => (
  <svg width="16" height="16" viewBox="0 0 16 16" fill="none">
    <circle cx="8" cy="8" r="7" fill="#e6eef9" stroke="#56698c" />
    <path d={plus ? "M4 8h8M8 4v8" : "M4 8h8"} stroke="#46556f" strokeWidth="2" />
  </svg>
);
const Triangle = ({ d }) => (
  <svg width="8" height="8" viewBox="0 0 8 8"><path d={d} fill="#3c4f78" /></svg>
);

/* data */

const TABS = ["Home", "Insert", "Page Layout", "Formulas", "Data", "Review", "View"];
const COLUMNS = "ABCDEFGHIJKLMNO".split("");

const ROWS = [
  ["BAR SUMMARY INFORMATION", ""],
  ["", ""],
  ["Bar ID:", "001"],
  ["Bar Name:", "Elane Bar"],
  ["Bar Location:", "Redondo Beach, California"],
  ["Bar Scale Model:", "Bar Manager Inventory Scale"],
  ["Bar Scale Serial Number:", "20081220"],
  ["Last synchronization of PC with scale:", "07/20/2009 5:49:06 PM"],
  ["Last update of data:", "07/20/2009 5:49:06 PM"],
  ["", ""],
  ["Pourer Weight:", "0 g"],
  ["Drink Size:", "44.4 ml"],
  ["Standard Drink Price:", "$0.00"],
  ["Premium Drink Price:", "$0.00"],
  ["Beer Drink Price:", "$0.00"],
  ["Total Number of Bar Records in PC:", "6"],
  ["Total Number of Bar Records in Scale:", "6"],
  ["Total Number of Empty Bottle Records in PC:", "3"],
  ["Total Number of Empty Bottle Records in Scale:", "3"],
  ["", ""],
  ["Number of Bar Records According to Type:", ""],
  ["Liquor/Other Liquor:", "2"],
  ["Wine Bottles:", "1"],
  ["Alcoholic Bottles:", "1"],
  ["Non-Alcoholic Bottles:", "1"],
  ["Other Merchandize:", "1"],
  ["", ""],
  ["CONSUMPTION:", ""],
  ["Total liquor consumption (usage) as of last synchronization:", "000.0 ml"],
  ["Total bottle consumption (usage) as of last synchronization:", "0 bottles"],
  ["Total merchandize consumption (usage) as of last synchronization:", "0 pieces/units"],
  ["Total revenue generated out of ALL consumption:", "$0.00"],
];

function Group({ label, w, grow, launcher, children }) {
  return (
    <GroupBox $w={w} $grow={grow}>
      <GroupBody>{children}</GroupBody>
      <GroupLabel $launcher={launcher}>
        <span>{label}</span>
        {launcher && (
          <PlainButton aria-label={`${label} options`}>
            <Launcher />
          </PlainButton>
        )}
      </GroupLabel>
    </GroupBox>
  );
}

function Combo({ label, value, w, join }) {
  return (
    <ComboBox $w={w} $join={join}>
      <select aria-label={label} defaultValue={value}>
        <option>{value}</option>
      </select>
      <Caret />
    </ComboBox>
  );
}

const ClipboardGroup = () => (
  <Group label="Clipboard" w={151} launcher>
    <BigButton $w={48}>
      <PasteIcon />
      Paste
      <Caret />
    </BigButton>
    <Stack>
      <TextButton $gap={3}><CutIcon />Cut</TextButton>
      <TextButton $gap={3}><CopyIcon />Copy</TextButton>
      <TextButton $gap={3}><PainterIcon />Format Painter</TextButton>
    </Stack>
  </Group>
);

const FontGroup = () => (
  <Group label="Font" w={196} launcher>
    <Rows>
      <Row>
        <Combo label="Font" value="Calibri" w={97} join />
        <Combo label="Font size" value="11" w={43} />
        <Strip>
          <StripButton $tight><Glyph $size={17}>A</Glyph><Caret up /></StripButton>
          <StripButton $tight $divide><Glyph $size={13}>A</Glyph><Caret /></StripButton>
        </Strip>
      </Row>
      <Row>
        <Strip>
          <StripButton $on><Glyph>B</Glyph></StripButton>
          <StripButton $divide $w={24}><Glyph $italic>I</Glyph></StripButton>
          <StripButton $divide $w={32}><Glyph $under>U</Glyph><Caret /></StripButton>
        </Strip>
        <Strip>
          <StripButton $w={32} aria-label="Borders"><BorderIcon /><Caret /></StripButton>
        </Strip>
        <Strip>
          <StripButton $w={33} aria-label="Fill colour"><FillColorIcon /><Caret /></StripButton>
          <StripButton $w={32} aria-label="Font colour"><FontColorIcon /><Caret /></StripButton>
        </Strip>
      </Row>
    </Rows>
  </Group>
);

const AlignmentGroup = () => (
  <Group label="Alignment" w={251} launcher>
    <Rows>
      <Row>
        <Strip>
          <StripButton aria-label="Top align"><AlignIcon kind="top" /></StripButton>
          <StripButton $divide $w={23} aria-label="Middle align"><AlignIcon kind="middle" /></StripButton>
          <StripButton $divide $on aria-label="Bottom align"><AlignIcon kind="bottom" /></StripButton>
        </Strip>
        <Strip>
          <StripButton $w={30} aria-label="Orientation"><OrientIcon /><Caret /></StripButton>
        </Strip>
      </Row>
      <Row>
        <Strip>
          <StripButton aria-label="Align left"><AlignIcon kind="left" /></StripButton>
          <StripButton $divide $w={23} aria-label="Center"><AlignIcon kind="center" /></StripButton>
          <StripButton $divide aria-label="Align right"><AlignIcon kind="right" /></StripButton>
        </Strip>
        <Strip>
          <StripButton $w={21} aria-label="Decrease indent"><IndentIcon out /></StripButton>
          <StripButton $divide aria-label="Increase indent"><IndentIcon /></StripButton>
        </Strip>
      </Row>
    </Rows>
    <Separator />
    <Rows $top={8}>
      <TextButton $gap={3}><WrapIcon />Wrap Text</TextButton>
      <TextButton $gap={3}><MergeIcon /><Line>Merge &amp; Center <Caret /></Line></TextButton>
    </Rows>
  </Group>
);

const NumberGroup = () => (
  <Group label="Number" w={136} launcher>
    <Rows>
      <Row>
        <Combo label="Number format" value="General" w={128} />
      </Row>
      <Row>
        <Strip>
          <StripButton $w={33}><Glyph>$</Glyph><Caret /></StripButton>
          <StripButton $divide $w={23}><Percent>%</Percent></StripButton>
          <StripButton $divide><Glyph $size={17}>,</Glyph></StripButton>
        </Strip>
        <Strip>
          <StripButton $w={21} aria-label="Increase decimal"><DecimalIcon more /></StripButton>
          <StripButton $divide aria-label="Decrease decimal"><DecimalIcon /></StripButton>
        </Strip>
      </Row>
    </Rows>
  </Group>
);

const StylesGroup = () => (
  <Group label="Styles" w={365} grow>
    <BigButton $w={76} $top={5}>
      <CondIcon />
      <span>Conditional</span>
      <Line>Formatting <Caret /></Line>
    </BigButton>
    <BigButton $w={51} $top={5}>
      <TableIcon />
      <span>Format</span>
      <Line>as Table <Caret /></Line>
    </BigButton>
    <Gallery>
      <Swatches>
        <Swatch $on $color="#000" $bg="#fff">Normal</Swatch>
        <Swatch $color="#9c0006" $bg="#ffc7ce">Bad</Swatch>
        <Swatch $color="#006100" $bg="#c6efce">Good</Swatch>
        <Swatch $color="#9c6500" $bg="#ffeb9c">Neutral</Swatch>
      </Swatches>
      <GalleryScroll>
        <PlainButton aria-label="Scroll up"><Caret up color="#9a9a9a" /></PlainButton>
        <PlainButton aria-label="Scroll down"><Caret /></PlainButton>
        <PlainButton aria-label="More styles"><Caret bar /></PlainButton>
      </GalleryScroll>
    </Gallery>
  </Group>
);

const CellsGroup = () => (
  <Group label="Cells" w={134}>
    <BigButton $w={46} $top={5}><InsertCellsIcon />Insert<Caret /></BigButton>
    <BigButton $w={40} $top={5}><DeleteCellsIcon />Delete<Caret /></BigButton>
    <BigButton $w={43}><FormatCellsIcon />Format<Caret /></BigButton>
  </Group>
);

const EditingStack = styled(Stack)`
  width: 85px;
  padding-left: 6px;
`;

const EditingGroup = () => (
  <Group label="Editing" w={176}>
    <EditingStack>
      <TextButton><SigmaIcon /><Line>AutoSum <Caret /></Line></TextButton>
      <TextButton><FillIcon /><Line>Fill <Caret /></Line></TextButton>
      <TextButton><EraserIcon /><Line>Clear <Caret /></Line></TextButton>
    </EditingStack>
    <BigButton $w={42}>
      <SortIcon />
      <span>Sort &amp;</span>
      <Line>Filter <Caret /></Line>
    </BigButton>
    <BigButton $w={42} $top={7}>
      <FindIcon />
      <span>Find &amp;</span>
      <Line>Select <Caret /></Line>
    </BigButton>
  </Group>
);

const Worksheet = () => (
  <SheetArea>
    <Table>
      <colgroup>
        <col width="26" />
        {COLUMNS.map((c) => (
          <col key={c} width={c === "A" ? 383 : c === "B" ? 215 : 64} />
        ))}
      </colgroup>
      <thead>
        <tr>
          <Corner>
            <svg width="12" height="12" viewBox="0 0 12 12"><path d="M12 0v12H0z" fill="#e8f1fc" /></svg>
          </Corner>
          {COLUMNS.map((c) => (
            <ColHead key={c} $on={c === "A"}>{c}</ColHead>
          ))}
        </tr>
      </thead>
      <tbody>
        {[...ROWS, ["", ""]].map(([label, value], i) => (
          <tr key={i}>
            <RowHead $on={i === 0}>{i < ROWS.length ? i + 1 : ""}</RowHead>
            <Cell $data $bold={i === 0}>
              <div>{label}</div>
              {i === 0 && <Selection />}
            </Cell>
            <Cell $data $right $inset={value[0] === "$"}>
              {value}
              {value === "001" && <ErrorMark />}
            </Cell>
            {COLUMNS.slice(2).map((c) => (
              <Cell key={c} />
            ))}
          </tr>
        ))}
      </tbody>
    </Table>
  </SheetArea>
);

const VerticalScroll = () => (
  <VScroll>
    <Splitter />
    <VTrack>
      <Triangle d="M0 6h8L4 2z" />
      <VThumb><Grip vertical /></VThumb>
    </VTrack>
    <Triangle d="M0 2h8L4 6z" />
  </VScroll>
);

export default function App() {
  return (
    <Window>
      <GlobalStyle />
      <TitleBar>
        <OfficeButton aria-label="Office"><OfficeLogo /></OfficeButton>
        <QuickAccess>
          <PlainButton aria-label="Save"><SaveIcon /></PlainButton>
          <PlainButton aria-label="Undo"><UndoIcon /></PlainButton>
          <Caret color="#a9bbd8" />
          <PlainButton aria-label="Redo"><UndoIcon flip /></PlainButton>
          <Caret color="#a9bbd8" />
        </QuickAccess>
        <Customize aria-label="Customize toolbar"><Caret bar color="#2a4c86" /></Customize>
        <Title><span>Book1</span> - Microsoft Excel</Title>
        <WindowButtons $gap={13}>
          <PlainButton aria-label="Minimize"><MinIcon /></PlainButton>
          <PlainButton aria-label="Restore"><RestoreIcon /></PlainButton>
          <PlainButton aria-label="Close"><CloseIcon /></PlainButton>
        </WindowButtons>
      </TitleBar>
      <TabRow>
        {TABS.map((t) => (
          <Tab key={t} $active={t === "Home"}>{t}</Tab>
        ))}
        <TabTools $gap={10}>
          <PlainButton aria-label="Help"><HelpIcon /></PlainButton>
          <PlainButton aria-label="Minimize workbook"><MinIcon /></PlainButton>
          <PlainButton aria-label="Restore workbook"><RestoreIcon /></PlainButton>
          <PlainButton aria-label="Close workbook"><CloseIcon /></PlainButton>
        </TabTools>
      </TabRow>
      <Ribbon>
        <ClipboardGroup />
        <FontGroup />
        <AlignmentGroup />
        <NumberGroup />
        <StylesGroup />
        <CellsGroup />
        <EditingGroup />
      </Ribbon>
      <FormulaBar>
        <NameBox>
          <input aria-label="Name box" defaultValue="A1" />
          <svg width="7" height="4" viewBox="0 0 7 4"><path d="M0 0h7L3.500 4z" fill="#000" /></svg>
        </NameBox>
        <FxArea>
          <Knob />
          <Fx>f<small>x</small></Fx>
        </FxArea>
        <FormulaInput aria-label="Formula" defaultValue="BAR SUMMARY INFORMATION" />
        <ExpandButton aria-label="Expand formula bar">
          <svg width="8" height="9" viewBox="0 0 8 9" fill="none" stroke="#000" strokeWidth="1.500">
            <path d="M1 1l3 3 3-3M1 5l3 3 3-3" />
          </svg>
        </ExpandButton>
      </FormulaBar>
      <Workspace>
        <Worksheet />
        <VerticalScroll />
      </Workspace>
      <SheetBar>
        <SheetNav>
          <PlainButton aria-label="First sheet"><NavIcon left bar /></PlainButton>
          <PlainButton aria-label="Previous sheet"><NavIcon left /></PlainButton>
          <PlainButton aria-label="Next sheet"><NavIcon /></PlainButton>
          <PlainButton aria-label="Last sheet"><NavIcon bar /></PlainButton>
        </SheetNav>
        <SheetTabs>
          <SheetTab $on $z={4}>Bar Summary</SheetTab>
          <SheetTab $z={3}>Sheet2</SheetTab>
          <SheetTab $z={2}>Sheet3</SheetTab>
          <SheetTab $z={1} aria-label="Insert worksheet"><NewSheetIcon /></SheetTab>
        </SheetTabs>
        <HScroll>
          <Handle />
          <Triangle d="M6 0v8L1 4z" />
          <HTrack>
            <HThumb><Grip /></HThumb>
          </HTrack>
          <Triangle d="M2 0v8l5-4z" />
          <Handle />
        </HScroll>
      </SheetBar>
      <StatusBar>
        <Ready>Ready</Ready>
        <ViewTools>
          <ViewSwitch>
            <ViewButton $on aria-label="Normal view"><ViewIcon kind="grid" /></ViewButton>
            <ViewButton aria-label="Page layout view"><ViewIcon kind="page" /></ViewButton>
            <ViewButton aria-label="Page break view"><ViewIcon kind="break" /></ViewButton>
          </ViewSwitch>
          <button>100%</button>
          <ZoomBox>
            <PlainButton aria-label="Zoom out"><ZoomIcon /></PlainButton>
            <ZoomRange type="range" aria-label="Zoom" defaultValue="50" />
            <PlainButton aria-label="Zoom in"><ZoomIcon plus /></PlainButton>
          </ZoomBox>
        </ViewTools>
      </StatusBar>
      <TaskBar />
    </Window>
  );
}
